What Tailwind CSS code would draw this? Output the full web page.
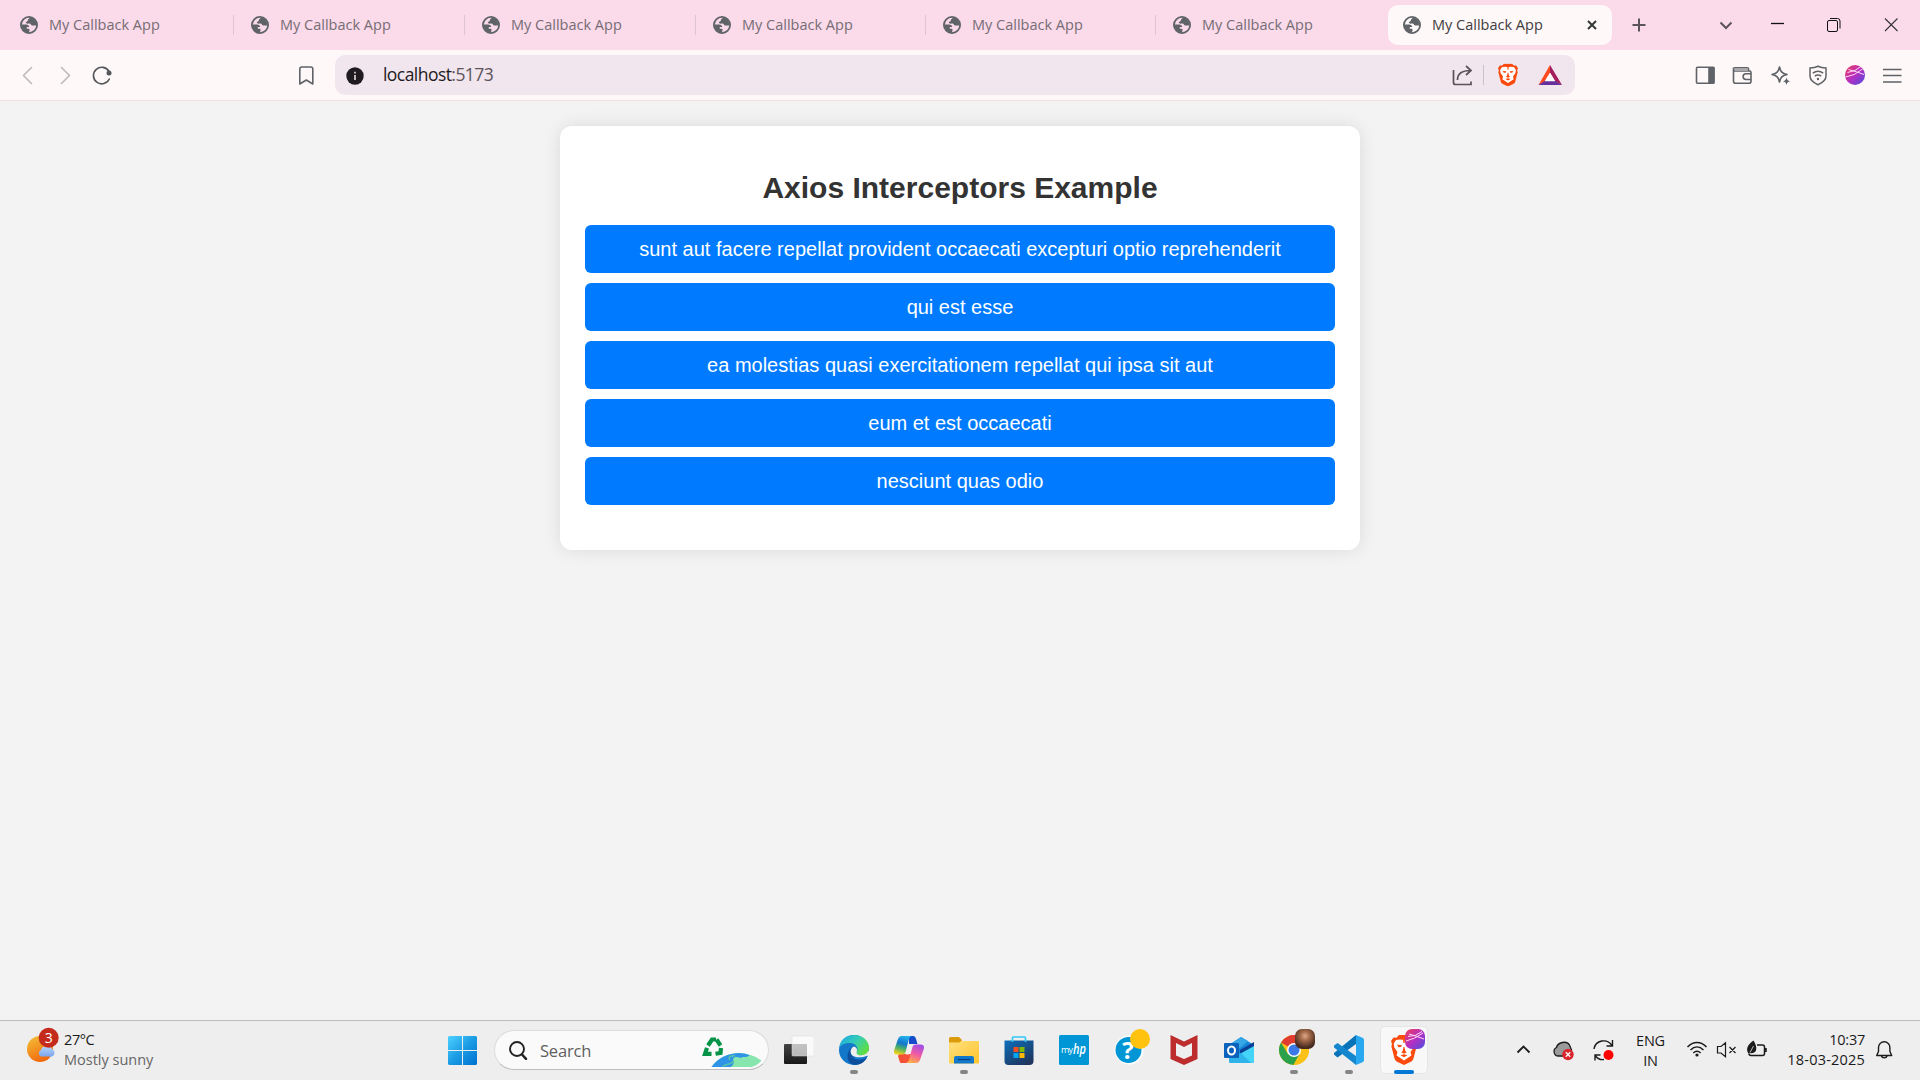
<!DOCTYPE html>
<html lang="en">
<head>
<meta charset="utf-8">
<title>My Callback App</title>
<script src="https://cdn.jsdelivr.net/npm/@tailwindcss/browser@4"></script>
</head>
<body class="relative w-[1920px] h-[1080px] overflow-hidden flex flex-col bg-[#f3f3f3] font-['Open_Sans','Noto_Sans',sans-serif]">
<svg class="absolute w-0 h-0">
  <symbol id="globe" viewBox="0 0 18 18"><circle cx="9" cy="9" r="8.1" fill="none" stroke="#5f6368" stroke-width="1.8"/><path d="M10 1.2c-.4 1.5-2.2 1.7-2.2 3.2 0 1.3-2 .9-2 2.4 0 1.2 2.3.8 3.6.8 1.6 0 1.4 2 3 2 1.3 0 2.3-.2 4-.2A8 8 0 0 0 10 1.2zM1.2 8.6h3.6c2.2 0 4.4.4 4.4 2.5H6.8v1.7h2.1c1 0 .9 3.2-.6 3.9A8 8 0 0 1 1.2 8.600z" fill="#5f6368"/></symbol>
  <symbol id="lion" viewBox="0 0 26 30"><path d="M8 0h10l2.500 2.700 3-.2L26 6l-1 3 .6 2.500-3.200 12.200a5 5 0 0 1-2 2.800L13 30l-7.400-3.500a5 5 0 0 1-2-2.800L.4 11.500 1 9 0 6l2.500-3.500 3 .2z" fill="#fb4a0e"/><path d="M13 5l4-.6 4 .6 2.300 3.500-.6 4-3.200 4.500.9 3.500-3 2L13 25.500 8.600 22.500l-3-2 .9-3.500-3.200-4.500-.6-4L5 5l4-.6z" fill="#fff"/><path d="M6 9.800l4.800.3-.8 1.900-2.500.2zM20 9.800l-4.800.3.8 1.900 2.500.2zM12.500 12h1l.8 4 1.500 1.200-2.800 1.500-2.800-1.500 1.500-1.200zM9.500 20.200l3.500-1 3.500 1-3.500 2zM12 5h2l-.5 3h-1z" fill="#fb4a0e"/></symbol>
  <linearGradient id="orb" x1="0" y1="0" x2="1" y2="1"><stop offset="0" stop-color="#f0405a"/><stop offset=".5" stop-color="#b62fc0"/><stop offset="1" stop-color="#4b4fe0"/></linearGradient>
</svg>

<!-- Tab strip -->
<header class="h-[50px] shrink-0 bg-[#fbdaea] flex items-center text-[14.5px] leading-5 text-[#766d74]">
  <div class="flex w-[1388px]">
    <div class="w-[234px] h-5 pl-5 flex items-center gap-[11px] border-r border-[#dfc5d3]"><svg class="size-[18px]"><use href="#globe"/></svg><span>My Callback App</span></div>
    <div class="w-[231px] h-5 pl-[17px] flex items-center gap-[11px] border-r border-[#dfc5d3]"><svg class="size-[18px]"><use href="#globe"/></svg><span>My Callback App</span></div>
    <div class="w-[231px] h-5 pl-[17px] flex items-center gap-[11px] border-r border-[#dfc5d3]"><svg class="size-[18px]"><use href="#globe"/></svg><span>My Callback App</span></div>
    <div class="w-[230px] h-5 pl-[17px] flex items-center gap-[11px] border-r border-[#dfc5d3]"><svg class="size-[18px]"><use href="#globe"/></svg><span>My Callback App</span></div>
    <div class="w-[230px] h-5 pl-[17px] flex items-center gap-[11px] border-r border-[#dfc5d3]"><svg class="size-[18px]"><use href="#globe"/></svg><span>My Callback App</span></div>
    <div class="w-[231px] h-5 pl-[17px] flex items-center gap-[11px]"><svg class="size-[18px]"><use href="#globe"/></svg><span>My Callback App</span></div>
  </div>
  <div class="w-[224px] h-10 rounded-[10px] bg-[#fff8f8] pl-[15px] pr-[14px] flex items-center text-[#3f3c40]">
    <svg class="size-[18px]"><use href="#globe"/></svg><span class="pl-[11px] grow">My Callback App</span>
    <svg class="size-[12px]" viewBox="0 0 12 12" stroke="#333639" stroke-width="2"><path d="M2 2l8 8M10 2l-8 8"/></svg>
  </div>
  <svg class="w-[308px] h-[50px]" viewBox="1612 0 308 50" fill="none"><path d="M1632.500 25h13M1639 18.500v13M1720.500 22.500l5.500 5.500 5.500-5.500" stroke="#5b5559" stroke-width="2"/><path d="M1771 23.500h13" stroke="#111" stroke-width="1.300"/><rect x="1827.500" y="20.500" width="10" height="11" rx="1.500" stroke="#111"/><path d="M1830 18.500h7.500a2.500 2.500 0 0 1 2.500 2.500v7.500" stroke="#111"/><path d="M1885 18.500l12.500 12.500M1897.500 18.500L1885 31" stroke="#333" stroke-width="1.100"/></svg>
</header>

<!-- Toolbar -->
<nav class="h-[51px] shrink-0 bg-[#fff8f8] border-b border-[#f3dce3] flex items-center">
  <svg class="w-[335px] h-[50px]" viewBox="0 50 335 50" fill="none" stroke-linecap="round" stroke-linejoin="round"><path d="M31.500 67.500L23.500 75.500l8 8M61.500 67.500l8 8-8 8" stroke="#bdb8bb" stroke-width="1.600"/><path d="M109 71.500A8.300 8.300 0 1 0 109.300 79" stroke="#545659" stroke-width="1.600"/><circle cx="109" cy="73" r="2.500" fill="#545659"/><path d="M299.800 84V69a2 2 0 0 1 2-2h9a2 2 0 0 1 2 2v15l-6.500-4z" stroke="#5f6368" stroke-width="1.600"/></svg>
  <div class="w-[1240px] h-10 rounded-[10px] bg-[#f1e5ee] flex items-center">
    <svg class="ml-[11px] mt-[2px] size-[18px]" viewBox="0 0 18 18"><circle cx="9" cy="9" r="8.700" fill="#201b1e"/><path d="M9 8v5M9 4.800v1.800" stroke="#d9d0d7" stroke-width="1.700"/></svg>
    <div class="pl-[19px] -mt-0.5 grow text-[17.500px] leading-6 tracking-[-0.55px] text-[#1f1a1d]">localhost<span class="text-[#5c5459]">:5173</span></div>
    <svg class="w-[130px] h-10" viewBox="1445 55 130 40" fill="none"><path d="M1453.500 70v12.500a2 2 0 0 0 2 2h15.500v-3M1457.500 80c0-6.500 5-9.500 13-9.500M1466 66l5 4.500-5 4.500" stroke="#5b5258" stroke-width="1.700"/><path d="M1483.500 65v20" stroke="#c9c2c9"/><svg x="1498" y="63.500" width="20" height="23"><use href="#lion"/></svg><path d="M1550 65l-11.500 20 6-3.500 5.500-9z" fill="#ff4a1f"/><path d="M1550 65l12 20-6.500-3.500-5.500-9z" fill="#a51f5c"/><path d="M1538.500 85h23.500l-6.500-4h-11z" fill="#67309b"/><path d="M1550 73l5 8.200h-10z" fill="#fff"/></svg>
  </div>
  <svg class="w-[345px] h-[50px]" viewBox="1575 50 345 50" fill="none" stroke="#5f6368" stroke-width="1.600"><rect x="1696.500" y="67.300" width="17.500" height="16" rx="1"/><path d="M1709 67h5.500v16.500h-5.500z" fill="#5f6368" stroke="none"/><path d="M1709 67v16"/><path d="M1733.500 69.500v11.800a2 2 0 0 0 2 2h13.500a2 2 0 0 0 2-2V72.500a1.500 1.500 0 0 0-1.500-1.500h-14.500zM1733.500 70.500v-1.800a1 1 0 0 1 1-1h13a1 1 0 0 1 1 1V71M1751 73.700h-5a2.800 2.800 0 0 0 0 5.800h5"/><path d="M1734 68h14v3h-13z" fill="#a9a7a9" stroke="none"/><path d="M1779.500 67c1.200 5 2.500 6.300 7.500 7.500-5 1.200-6.300 2.500-7.500 7.500-1.200-5-2.500-6.300-7.500-7.500 5-1.200 6.300-2.500 7.500-7.500z" stroke-linejoin="round"/><path d="M1786.500 77.500c.6 2.500 1.200 3.200 3.500 3.700-2.300.6-2.900 1.300-3.500 3.800-.6-2.500-1.200-3.200-3.500-3.800 2.300-.5 2.900-1.200 3.500-3.700z" fill="#5f6368" stroke="none"/><path d="M1818 66.300c2.500 1.200 5 1.600 8 1.700v8c0 4-4 7-8 8.700-4-1.700-8-4.700-8-8.700v-8c3-.1 5.500-.5 8-1.700z" stroke-width="1.500"/><path d="M1812.800 73.200c3.200-2.300 7.200-2.300 10.400 0M1814.800 76.200c2-1.500 4.400-1.500 6.400 0" stroke-width="1.500"/><circle cx="1818" cy="79" r="1.200" fill="#5f6368" stroke="none"/><circle cx="1855" cy="75" r="10" fill="url(#orb)" stroke="none"/><path d="M1847.500 72.500q8-1 13.500-6M1848.500 69.500q8 2 15.500 5M1845.500 77q9-1 17-8" stroke="#ffd9f5" stroke-width="1"/><path d="M1883 69.500h18.500M1883 75.500h18.500M1883 82h18.500"/></svg>
</nav>

<!-- Page -->
<main class="grow pt-[25px] font-['Liberation_Sans',Arial,sans-serif]">
  <section class="w-[800px] h-[424px] mx-auto rounded-[12px] bg-white shadow-[0_0_18px_rgba(0,0,0,0.1)] px-[25px] pt-[44px]">
    <h1 class="text-center text-[30px] leading-[35px] font-bold text-[#333]">Axios Interceptors Example</h1>
    <ul class="mt-5 flex flex-col gap-[10px] text-center text-[20px] leading-[23px] text-white">
      <li class="h-12 rounded-[6px] bg-[#007bff] pt-[13px]">sunt aut facere repellat provident occaecati excepturi optio reprehenderit</li>
      <li class="h-12 rounded-[6px] bg-[#007bff] pt-[13px]">qui est esse</li>
      <li class="h-12 rounded-[6px] bg-[#007bff] pt-[13px]">ea molestias quasi exercitationem repellat qui ipsa sit aut</li>
      <li class="h-12 rounded-[6px] bg-[#007bff] pt-[13px]">eum et est occaecati</li>
      <li class="h-12 rounded-[6px] bg-[#007bff] pt-[13px]">nesciunt quas odio</li>
    </ul>
  </section>
</main>

<!-- Taskbar -->
<footer class="h-[60px] shrink-0 border-t border-[#bcbcbc] bg-[#eee] flex items-start text-[#1b1b1b]">
  <div class="w-[448px] flex">
    <svg class="w-[64px] h-[59px]" viewBox="0 1021 64 59"><defs><linearGradient id="sun" x1="0" y1="0" x2=".5" y2="1"><stop stop-color="#f3c33a"/><stop offset="1" stop-color="#f2690d"/></linearGradient><linearGradient id="cl" x1="0" y1="0" x2="0" y2="1"><stop stop-color="#b9d6fb"/><stop offset="1" stop-color="#7ba6ee"/></linearGradient></defs><circle cx="40" cy="1049" r="13" fill="url(#sun)"/><path d="M41 1056.500a3.500 3.500 0 0 1 0-6.500 6 6 0 0 1 11-1 4 4 0 0 1 0 7.500z" fill="url(#cl)"/><circle cx="48.700" cy="1037.700" r="10" fill="#c42b1c"/><text x="48.700" y="1042.700" text-anchor="middle" font-size="14" fill="#fff">3</text></svg>
    <div class="pt-[9px] text-[14.500px] leading-5 tracking-[-0.4px]"><div>27°C</div><div class="text-[#666] tracking-[0px]">Mostly sunny</div></div>
  </div>
  <svg class="w-[46px] h-[59px]" viewBox="448 1021 46 59"><defs><linearGradient id="win" gradientUnits="userSpaceOnUse" x1="448" y1="1036" x2="477" y2="1065"><stop stop-color="#4dd2ff"/><stop offset=".5" stop-color="#1a9be4"/><stop offset="1" stop-color="#0070d0"/></linearGradient></defs><path d="M449 1036h13v14h-14v-13zM463 1036h13l1 1v13h-14zM448 1051h14v14h-13l-1-1zM463 1051h14v13l-1 1h-13z" fill="url(#win)"/></svg>
  <div class="mt-[9px] w-[275px] h-[40px] rounded-full border border-[#dcdcdc] border-b-[#bdbdbd] bg-[#fafafa] flex items-center">
    <svg class="ml-[13px] size-[20px]" viewBox="508 1039 20 20" fill="none" stroke="#222" stroke-linecap="round"><circle cx="517" cy="1048" r="7" stroke-width="1.900"/><path d="M522 1053.500l4 4.300" stroke-width="2.500"/></svg>
    <span class="pl-3 pt-0.5 w-[172px] shrink-0 text-[16.500px] leading-6 text-[#606060] tracking-[-0.2px]">Search</span>
    <svg class="w-[64px] h-[38px] shrink-0" viewBox="700 1031 64 38"><g fill="none" stroke="#059347" stroke-width="4.200"><path d="M708 1045.500l4-6h4M716.500 1039.500l4 6M721 1048l-.5 5-5 .8M711.500 1053.800h-6.500l2-6"/></g><path d="M711.500 1067q9-13 27-14 14 .5 23 7.500-4 5-10 6.500z" fill="#87e5ae"/><path d="M711.500 1067q9-13 27-14 6 0 11 2c-2 3-6 1-9 3-3-2-9-1-7 3 1 2-1 5-3 6z" fill="#2f94e8"/><path d="M730 1060c-3-3 2-5 5-4M723 1067c1-4 7-1 11-6" fill="none" stroke="#58c3a8" stroke-width="1.500"/></svg>
  </div>
  <div class="flex pl-[2.5px]">
    <div class="w-[55px] pt-[14px] flex justify-center"><svg class="size-[30px]" viewBox="0 0 30 30"><defs><linearGradient id="tv" x1="0" y1="0" x2="0" y2="1"><stop stop-color="#444"/><stop offset="1" stop-color="#181818"/></linearGradient></defs><rect y="9" width="23" height="20" rx="1" fill="url(#tv)"/><rect x="8" y="1" width="22" height="20" rx="1" fill="#fff" fill-opacity=".68" stroke="#ddd" stroke-opacity=".5"/></svg></div>
    <div class="relative w-[55px] h-[59px] pt-[14px] flex justify-center"><svg class="size-[30px]" viewBox="0 0 30 30"><defs><linearGradient id="eg" x1="0" y1=".1" x2="1" y2=".7"><stop stop-color="#1ca8e5"/><stop offset=".5" stop-color="#35cdb5"/><stop offset="1" stop-color="#62df38"/></linearGradient></defs><circle cx="15" cy="15" r="15" fill="#1377ca"/><path d="M.3 13C1 5 7 0 15 0c9 0 15 6 15 12.500 0 6-4 8-8 8-4.500 0-5.500-2-4-4C19.500 13 17 8 10.500 8 5 8 1.300 10.500.3 13z" fill="url(#eg)"/><path d="M28 22.500C26 27 21 30 16.500 30 10 30 8 24 8.500 20c.5-4 3-7 5.500-8-2 2.500-3 6-1 9 3 5 9 4.500 15 1.500z" fill="#0d4f9d"/><path d="M15 11.500c-3 1-4.500 5-2.500 8s9 4 15.500 1.300l2 .2.5-6.500-3 4c-3 2-8 2.500-9.500.5s2.500-5-3-7.500z" fill="#eee"/></svg><i class="absolute bottom-[6px] w-2 h-1 rounded-full bg-[#858585]"></i></div>
    <div class="w-[55px] pt-[14px] flex justify-center"><svg class="size-[30px]" viewBox="0 0 30 30"><defs><linearGradient id="ca" x1=".6" y1="0" x2=".3" y2="1"><stop stop-color="#24b2ed"/><stop offset=".4" stop-color="#1476ce"/><stop offset=".65" stop-color="#41ad6d"/><stop offset="1" stop-color="#f5d318"/></linearGradient><linearGradient id="cb" x1=".7" y1="0" x2=".3" y2="1"><stop stop-color="#a24ee5"/><stop offset=".5" stop-color="#f15ba3"/><stop offset="1" stop-color="#ffb044"/></linearGradient></defs><path d="M15 1h4c2 0 2.500 1.500 3 3l1.500 5H15z" fill="#164ccc"/><path d="M7 28h5c2 0 3-1.500 3.500-3l1.500-6H5l-1 2 1.500 5c.3 1.200.7 2 1.500 2z" fill="#f45138"/><path d="M8 1h10c-1.500 0-2.500 1.500-3 3l-3.500 13c-.5 1.700-1.500 2.500-3 2.500H3c-2.500 0-3.500-2-2.800-4.500L4 4c.6-2 2-3 4-3z" fill="url(#ca)"/><path d="M22 28H12c1.500 0 2.500-1.500 3-3l3.500-13c.5-1.700 1.500-2.500 3-2.500H27c2.500 0 3.500 2 2.800 4.500L26 25c-.6 2-2 3-4 3z" fill="url(#cb)"/><path d="M14.500 9.500h3.500l-3 10h-3z" fill="#f4eef0"/></svg></div>
    <div class="relative w-[55px] h-[59px] pt-[14px] flex justify-center"><svg class="size-[30px]" viewBox="0 0 30 30"><defs><linearGradient id="fo" x1="0" y1="0" x2="1" y2="1"><stop stop-color="#ffe080"/><stop offset="1" stop-color="#ffc52c"/></linearGradient></defs><path d="M0 3.500A1.500 1.500 0 0 1 1.500 2H10l3 3-3 5H0z" fill="#dc9b0b"/><path d="M0 7.500h10l3-1.500h16a1 1 0 0 1 1 1v20.500a1 1 0 0 1-1 1H1a1 1 0 0 1-1-1z" fill="url(#fo)"/><path d="M5 28.500V23a2 2 0 0 1 2-2h16a2 2 0 0 1 2 2v5.500z" fill="#1279ca"/><path d="M9 24.500h12.500" stroke="#0b3f83" stroke-width="1.200"/></svg><i class="absolute bottom-[6px] w-2 h-1 rounded-full bg-[#858585]"></i></div>
    <div class="w-[55px] pt-[14px] flex justify-center"><svg class="size-[30px]" viewBox="0 0 30 30"><defs><linearGradient id="st" x1="0" y1="0" x2=".7" y2="1"><stop stop-color="#0c6ebc"/><stop offset="1" stop-color="#20365e"/></linearGradient></defs><path d="M.5 5.500h29V26a4 4 0 0 1-4 4h-21a4 4 0 0 1-4-4z" fill="url(#st)"/><path d="M8.500 7V3a1 1 0 0 1 1-1h11a1 1 0 0 1 1 1v4" fill="none" stroke="#33c8f5" stroke-width="1.700"/><path d="M9.500 12H14.500v5h-5z" fill="#f25022"/><path d="M15.500 12h5v5h-5z" fill="#7fba00"/><path d="M9.500 18h5v5h-5z" fill="#00a4ef"/><path d="M15.500 18h5v5h-5z" fill="#ffb900"/></svg></div>
    <div class="w-[55px] pt-[14px] flex justify-center"><svg class="size-[30px]" viewBox="0 0 30 30"><rect width="30" height="30" rx="1.500" fill="#0096d6"/><text x="2" y="17.500" font-size="9" fill="#fff" textLength="12">my</text><text x="14" y="19" font-size="14" font-weight="600" font-style="italic" fill="#fff" textLength="13" lengthAdjust="spacingAndGlyphs">hp</text></svg></div>
    <div class="relative w-[55px] pt-[14px] flex justify-center"><svg class="size-[30px] overflow-visible" viewBox="0 0 30 30"><circle cx="15" cy="15" r="14.500" fill="#fff"/><circle cx="14.500" cy="15" r="13" fill="#0096d6"/><text x="14" y="23.500" font-size="24" font-weight="700" fill="#fff" text-anchor="middle">?</text></svg><i class="absolute left-[28.5px] top-[8px] size-5 rounded-full bg-[#ffc20e]"></i></div>
    <div class="w-[55px] pt-[14px] flex justify-center"><svg class="size-[30px]" viewBox="0 0 30 30"><path d="M1.500 0L15 6.500 28.500 0v24L15 30 1.500 24zM7 8v12.500l8 3.500 8-3.500V8l-8 4z" fill="#bd2d2e" fill-rule="evenodd"/></svg></div>
    <div class="w-[55px] pt-[14px] flex justify-center"><svg class="size-[30px]" viewBox="0 0 30 30"><path d="M5 10L17 2l13 8v16a2 2 0 0 1-2 2H7a2 2 0 0 1-2-2z" fill="#1686d9"/><path d="M5 10L17 2l7 4-8 7z" fill="#37a6e6"/><path d="M16 15l14-8v6l-14 8z" fill="#0b3f95"/><path d="M14 20l16-9v15a2 2 0 0 1-2 2H14z" fill="#43d4f8"/><path d="M5 22l12-4 10 10H7a2 2 0 0 1-2-2z" fill="#2eb3ea"/><rect y="8" width="15" height="15" rx="1" fill="#0a62bd"/><ellipse cx="7.500" cy="15.500" rx="3.500" ry="4" fill="none" stroke="#fff" stroke-width="2"/></svg></div>
    <div class="relative w-[55px] h-[59px] pt-[14px] flex justify-center"><svg class="size-[30px]" viewBox="0 0 30 30"><circle cx="15" cy="15" r="15" fill="#fbc116"/><path d="M15 15H30A15 15 0 0 0 2 7.500z" fill="#e23c31"/><path d="M2 7.500A15 15 0 0 0 14.500 30L21 18.500 9 19z" fill="#2ba14b"/><path d="M21 18.500L14.500 30A15 15 0 0 0 28.500 8.500H15z" fill="#fbc116"/><circle cx="15" cy="15" r="7" fill="#fff"/><circle cx="15" cy="15" r="5.500" fill="#3c79e6"/></svg><i class="absolute left-[28.5px] top-[8px] size-5 rounded-[7px] bg-[radial-gradient(circle_at_50%_35%,#e0a888_0%,#a06848_30%,#4a2c20_70%,#35201a_100%)]"></i><i class="absolute bottom-[6px] w-2 h-1 rounded-full bg-[#858585]"></i></div>
    <div class="relative w-[55px] h-[59px] pt-[14px] flex justify-center"><svg class="size-[30px]" viewBox="0 0 30 30"><path d="M22 0v9L3.500 22.500 0 19.500v-1.500z" fill="#0873b8"/><path d="M22 30v-9L3.500 8 0 10.500v2z" fill="#1587cf"/><path d="M22 0l7 3 1 1.500v21L29 27l-7 3z" fill="#28a8f0"/></svg><i class="absolute bottom-[6px] w-2 h-1 rounded-full bg-[#858585]"></i></div>
    <div class="relative w-[55px] h-[59px] pt-[5px] flex justify-center"><div class="w-[48px] h-[48px] rounded-[5px] bg-[#f8f8f8] border border-[#e6e6e6] pt-[8px] pl-[10px]"><svg class="w-[26px] h-[30px]"><use href="#lion"/></svg></div><svg class="absolute left-[28.5px] top-[8px] size-5" viewBox="0 0 20 20"><rect width="20" height="20" rx="7" fill="url(#orb)"/><path d="M1 12q9-2 17-8M4 5q7 2 15 5M3 7.500q8 0 14-5" stroke="#ffd9f5" fill="none"/></svg><i class="absolute bottom-[6px] w-5 h-1 rounded-full bg-[#0078d4]"></i></div>
  </div>
  <svg class="w-[200.5px] h-[59px]" viewBox="1431.500 1021 200.5 59" fill="none" stroke="#1b1b1b"><path d="M1517 1052.500l6-6 6 6" stroke-width="1.800"/><path d="M1558 1056a4.500 4.500 0 0 1-2-8.500c1-5 10-7.500 13-2.500l2 5-3 6z" fill="#9a9a9a" stroke-width="1.300"/><circle cx="1567.500" cy="1054.500" r="5.700" fill="#d9252e" stroke="none"/><path d="M1565.300 1052.300l4.400 4.400M1569.700 1052.300l-4.400 4.400" stroke="#fff" stroke-width="1.300"/><path d="M1593.500 1049c1.500-9 13-11 18-3.500M1612 1040v6h-6M1600 1055h-5.500v5.500M1595 1056c2 2.500 5 4 8.500 3.500" stroke-width="1.400"/><circle cx="1608" cy="1055" r="5" fill="#f00" stroke="none"/></svg>
  <div class="w-[37px] pt-[10px] text-center text-[14.500px] leading-5 tracking-[-0.2px]">ENG<br>IN</div>
  <svg class="w-[104px] h-[59px]" viewBox="1670 1021 104 59" fill="none" stroke="#1b1b1b" stroke-width="1.500"><path d="M1688.500 1047c5.500-6 13.500-6 19 0M1691.500 1050c4-4 9-4 13 0M1694.300 1053c2.300-2.200 5-2.200 7.400 0"/><circle cx="1698" cy="1055" r="1.600" fill="#1b1b1b" stroke="none"/><path d="M1718.500 1046.500h3.500l4.500-3.800v14l-4.500-3.700h-3.500zM1730.500 1047l6 6M1736.500 1047l-6 6" stroke-width="1.200"/><path d="M1758 1045h5.500a2 2 0 0 1 2 2v6.500a2 2 0 0 1-2 2h-11.500a2 2 0 0 1-2-2M1767 1048v4" stroke-width="1.500"/><path d="M1749.500 1053.500c-3-4-1-9 5-13 2 3 3.500 7 2.500 10-1 2.500-4 3-6 2.500z" fill="#1b1b1b" stroke="none"/><path d="M1751 1052.500l3.500-6.500" stroke="#eee" stroke-width=".8"/></svg>
  <div class="w-[92px] pt-[9px] text-right text-[14.500px] leading-5 tracking-[-0.25px] whitespace-nowrap">10:37<br><span class="tracking-[0.2px]">18-03-2025</span></div>
  <svg class="w-[50px] h-[59px]" viewBox="1866 1021 50 59" fill="none" stroke="#1b1b1b" stroke-width="1.400" stroke-linejoin="round"><path d="M1877.700 1055.500l1.800-4v-4a5.700 5.700 0 0 1 11.400 0v4l1.800 4zM1882.500 1056c.5 2.500 5 2.500 5.500 0"/></svg>
</footer>
</body>
</html>
